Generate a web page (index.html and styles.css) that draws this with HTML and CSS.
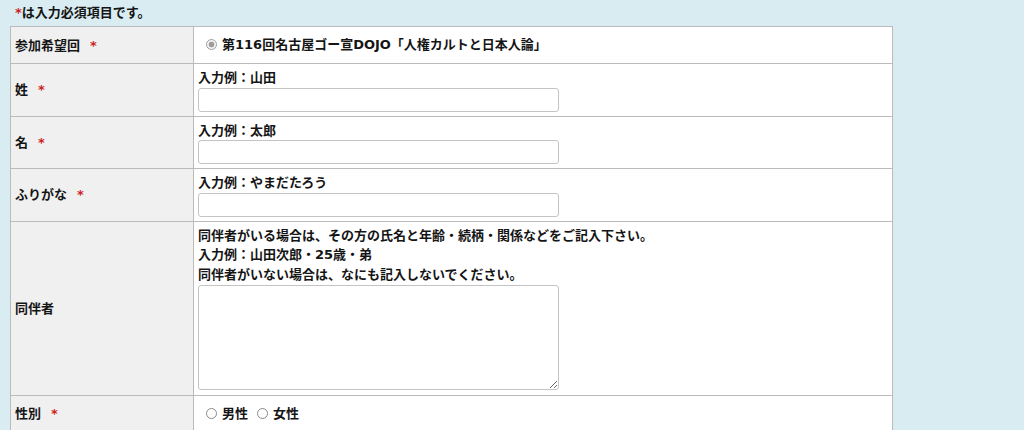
FILE: index.html
```html
<!DOCTYPE html>
<html lang="ja">
<head>
<meta charset="utf-8">
<title>申込フォーム</title>
<link rel="stylesheet" href="styles.css">
</head>
<body>
<div class="page">
  <p class="note"><span class="req-mark">*</span>は入力必須項目です。</p>
  <table class="form-table">
    <colgroup><col class="col-label"><col class="col-value"></colgroup>
    <tbody>
      <tr>
        <th class="label">参加希望回<span class="req">*</span></th>
        <td class="value value-radio">
          <label class="choice"><span class="radio radio-checked"></span>第116回名古屋ゴー宣DOJO「人権カルトと日本人論」</label>
        </td>
      </tr>
      <tr>
        <th class="label">姓<span class="req">*</span></th>
        <td class="value">
          <div class="hint">入力例：山田</div>
          <input class="text-input" type="text">
        </td>
      </tr>
      <tr>
        <th class="label">名<span class="req">*</span></th>
        <td class="value">
          <div class="hint">入力例：太郎</div>
          <input class="text-input" type="text">
        </td>
      </tr>
      <tr>
        <th class="label">ふりがな<span class="req">*</span></th>
        <td class="value">
          <div class="hint">入力例：やまだたろう</div>
          <input class="text-input" type="text">
        </td>
      </tr>
      <tr>
        <th class="label">同伴者</th>
        <td class="value">
          <div class="hint">同伴者がいる場合は、その方の氏名と年齢・続柄・関係などをご記入下さい。</div>
          <div class="hint">入力例：山田次郎・25歳・弟</div>
          <div class="hint">同伴者がいない場合は、なにも記入しないでください。</div>
          <textarea class="text-area"></textarea>
        </td>
      </tr>
      <tr>
        <th class="label">性別<span class="req">*</span></th>
        <td class="value value-radio">
          <label class="choice"><span class="radio"></span>男性</label><label class="choice choice-next"><span class="radio"></span>女性</label>
        </td>
      </tr>
    </tbody>
  </table>
</div>
</body>
</html>
```
FILE: styles.css
```css
html, body {
  margin: 0;
  padding: 0;
}
body {
  background: #d9ecf2;
  color: #151515;
  font-family: "DejaVu Sans", "Noto Sans CJK JP", sans-serif;
  font-size: 13px;
  font-weight: bold;
  line-height: 19px;
}
.page {
  padding: 3px 10px 0 10px;
}
.note {
  margin: 0 0 4px 0;
  padding-left: 5px;
  height: 19px;
}
.req-mark {
  color: #cc2222;
}
.form-table {
  border-collapse: collapse;
  table-layout: fixed;
  width: 883px;
  background: #fff;
}
.col-label {
  width: 183px;
}
.label,
.value {
  border: 1px solid #bbbbbb;
  padding: 4px;
  vertical-align: middle;
  text-align: left;
}
.label {
  background: #f0f0f0;
  font-weight: bold;
}
.req {
  color: #cc2222;
  margin-left: 10px;
}
.value {
  background: #fff;
}
.value-radio {
  padding-top: 8px;
  padding-bottom: 8px;
}
.hint {
  margin: 0;
  height: 19.5px;
  line-height: 19.5px;
}
.choice {
  display: inline-flex;
  align-items: center;
  height: 19px;
}
.choice-next {
  margin-left: 1px;
}
.radio {
  display: inline-block;
  box-sizing: border-box;
  width: 11px;
  height: 11px;
  margin: 0 5px 0 8px;
  border: 1px solid #8a8a8a;
  border-radius: 50%;
  background: #fff;
}
.radio-checked {
  border-color: #a0a0a0;
  background: radial-gradient(circle, #9c9c9c 0, #9c9c9c 2.6px, #f4f4f4 3.2px);
}
.text-input {
  display: block;
  box-sizing: border-box;
  width: 361px;
  height: 24px;
  margin: 0;
  border: 1px solid #c4c4c4;
  border-radius: 3px;
  background: #fff;
  font: inherit;
  font-weight: normal;
  padding: 2px 4px;
}
.text-area {
  display: block;
  box-sizing: border-box;
  width: 361px;
  height: 105px;
  margin: 1px 0 0.5px 0;
  border: 1px solid #c4c4c4;
  border-radius: 3px;
  background: #fff;
  font: inherit;
  font-weight: normal;
  padding: 2px 4px;
}
```
